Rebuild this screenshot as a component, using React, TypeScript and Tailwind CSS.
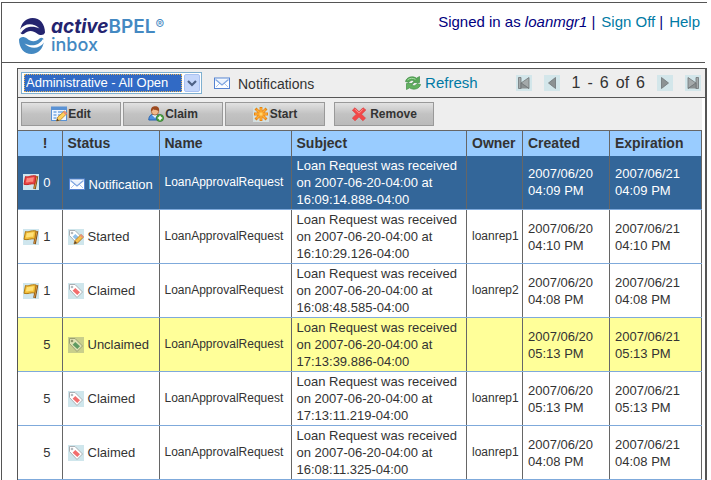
import React from "react";

function Mail() {
  return (
    <svg className="block h-4 w-4 shrink-0" viewBox="0 0 16 16" aria-hidden="true">
      <rect x="0.5" y="3" width="15" height="10.5" fill="#fdfeff" stroke="#5583d2" />
      <path d="M2 12l4-4M14 12l-4-4" stroke="#a9c4ec" fill="none" />
      <path d="M1.500 4.500L8 10l6.500-5.500" stroke="#7fa5e0" strokeWidth="1.300" fill="#eaf2fd" />
    </svg>
  );
}

function Flag({ red }: { red?: boolean }) {
  const light = red ? "#ff8a80" : "#ffe27a";
  const fill = red ? "#e84545" : "#f2bf3a";
  const line = red ? "#c62828" : "#b07a14";
  return (
    <svg className="block h-4 w-4 shrink-0" viewBox="0 0 16 16" aria-hidden="true">
      <rect width="16" height="16" fill="#cfe6ee" />
      <path d="M14 2l-2.500 13" stroke="#7d4a12" strokeWidth="2.600" />
      <path d="M14 2l-2.500 12.500" stroke="#e0a14a" strokeWidth="1" />
      <path d="M2.500 2.500c3 1.200 5-1.500 10.500-.5l-1.200 8c-4-1-6.500 1.500-10.800.3z" fill={fill} stroke={line} />
      <path d="M3.900 4c2.500.6 4-.8 7-.7l-.8 4.500C7 7.500 5.500 8.700 2.900 8.300z" fill={light} />
    </svg>
  );
}

function Tag({ kind }: { kind: string }) {
  const open = kind === "Unclaimed";
  const started = kind === "Started";
  return (
    <svg className="block h-4 w-4 shrink-0" viewBox="0 0 16 16" aria-hidden="true">
      <rect width="16" height="16" fill={open ? "#c9cf8b" : "#cfe6ec"} />
      <path d="M1.500 1.500l5.500 0 7.500 7.500-5.500 5.500-7.500-8z" fill={open ? "#dfe3b4" : "#fff"} stroke={open ? "#9ba072" : "#aab0b5"} />
      <circle cx="4" cy="4" r="1.300" fill={open ? "#8d936a" : "#b4b9bd"} />
      <path d="M7.300 5l4.700 4.300-2.700 2.700-4.700-4.300z" fill={open ? "#5f9a62" : started ? "#8fc0ea" : "#f26d6d"} />
      {started && (
        <g>
          <path d="M6 15l1-3.500 6-6 2.500 2.500-6 6z" fill="#f7c14c" stroke="#b5771c" strokeWidth=".8" />
          <path d="M6 15l1-3 2 2z" fill="#584433" />
          <path d="M12 6.500l1.200-1.200 2.400 2.400L14.400 9z" fill="#e88f84" />
        </g>
      )}
    </svg>
  );
}

function EditIcon() {
  return (
    <svg className="block h-4 w-4" viewBox="0 0 16 16" aria-hidden="true">
      <rect x="0.500" y="1" width="15" height="13.500" fill="#eef6ff" stroke="#5a92d4" />
      <path d="M1 2.500h14" stroke="#5a92d4" strokeWidth="3" />
      <path d="M2.500 6h3M2.500 9h3M2.500 12h3M7 6h6M7 9h3" stroke="#77a9e2" strokeWidth="1.500" />
      <path d="M5.500 15l1.300-4 6.700-6L16 7.500 9.300 14z" fill="#ffd25d" stroke="#b97e1b" strokeWidth=".8" />
      <path d="M12 6.300L13.500 5 16 7.500l-1.500 1.400z" fill="#ee8c78" />
      <path d="M5.500 15l.7-2.200L8 14.400z" fill="#40342c" />
    </svg>
  );
}

function ClaimIcon() {
  return (
    <svg className="block h-4 w-4" viewBox="0 0 16 16" aria-hidden="true">
      <path d="M.8 14c0-4 2-6 6-6s6 2 6 6z" fill="#4d90df" stroke="#2563b0" />
      <path d="M4 9l3 3 3-3" fill="#e9f3ff" />
      <circle cx="7" cy="5.500" r="3.600" fill="#f2b98b" stroke="#9c5627" strokeWidth=".7" />
      <path d="M3 5.500C2.500 1.500 5 .3 7.200.3 10 .3 11.700 2 11 5.500 10 3.500 6 4.500 5 3.300 4.500 5 3.800 4.800 3 5.500z" fill="#9c4a20" />
      <circle cx="12" cy="12" r="3.600" fill="#4da343" stroke="#2e752a" strokeWidth=".7" />
      <path d="M12 9.800v4.400M9.800 12h4.400" stroke="#fff" strokeWidth="1.500" />
    </svg>
  );
}

function StartIcon() {
  return (
    <svg className="block h-4 w-4" viewBox="0 0 16 16" aria-hidden="true">
      <rect width="16" height="16" fill="#d3dfe0" />
      <path d="M8 1v14M1 8h14M2.500 2.500l11 11M13.500 2.500l-11 11" stroke="#e88413" strokeWidth="2.800" />
      <path d="M8 2v12M2 8h12M3.500 3.500l9 9M12.500 3.500l-9 9" stroke="#ffae35" strokeWidth="1.500" />
      <circle cx="8" cy="8" r="1.500" fill="#ffd36b" />
    </svg>
  );
}

function RemoveIcon() {
  return (
    <svg className="block h-4 w-4" viewBox="0 0 16 16" aria-hidden="true">
      <path d="M4 1.800l4 4 4-4L14.800 4 10.500 8.200l4 4-2.700 2.500L8 10.800l-4 4L1.400 12l4-3.800-4-4z" fill="#f34848" stroke="#dd4446" strokeWidth=".8" />
      <path d="M4 3.200l4 4 4-4" stroke="#ff9a94" fill="none" />
    </svg>
  );
}

function RefreshIcon() {
  const arrow = "M.5 6.500C1.500 2 7.500.5 11.500 3.200L14.500 1.500v6H7.500L9.500 5.800C7.500 4.800 5 5 4 7.500z";
  return (
    <svg className="block h-4 w-4" viewBox="0 0 16 16" aria-hidden="true">
      <path d={arrow} fill="#58a858" stroke="#3f8c45" strokeWidth=".7" />
      <path d={arrow} transform="rotate(180 8 8)" fill="#62b160" stroke="#3f8c45" strokeWidth=".7" />
      <path d="M2.500 5C4.500 3 8 2.800 10.500 4.300" stroke="#a9dda4" fill="none" />
    </svg>
  );
}

function PageIcon({ back, end }: { back?: boolean; end?: boolean }) {
  return (
    <svg className="block h-4 w-4" viewBox="0 0 16 16" aria-hidden="true">
      <rect width="16" height="16" fill="#d3e6ea" />
      <g transform={back ? "matrix(-1 0 0 1 16 0)" : undefined}>
        {end ? (
          <g stroke="#707577" strokeWidth=".8">
            <path d="M3 2.500v11L11 8z" fill="#a4a9aa" />
            <path d="M11 2.500h2.500v11H11z" fill="#a4a9aa" />
            <path d="M3 13.500L11 8v5.500" fill="#8b9091" />
          </g>
        ) : (
          <path d="M4.500 2.500v11L11.500 8z" fill="#8c9293" stroke="#6f7577" strokeWidth=".8" />
        )}
      </g>
    </svg>
  );
}

function LogoHalf({ color }: { color: string }) {
  return (
    <g>
      <path d="M1 13C2 5 7 0 13.500 0 21 0 26 6 26 14.500 25 17.500 21 17.800 18 15.500 14 12 9 12 5.500 15.500 3.500 17 1 16 1 13z" fill={color} />
      <path d="M1 11.500C5 5.500 14 4 20.500 10.500 14.500 7.500 6 8 2.500 14.500L0 15z" fill="#fff" />
    </g>
  );
}

function Logo() {
  return (
    <div className="flex items-start gap-[6px]">
      <svg className="mt-[1px] h-[36px] w-[26px]" viewBox="0 0 26 36" aria-hidden="true">
        <LogoHalf color="#24246f" />
        <g transform="rotate(180 13 18)">
          <LogoHalf color="#4489c2" />
        </g>
      </svg>
      <div className="font-['Inter','Liberation_Sans',sans-serif] text-[#4489c2]">
        <div className="flex text-[19px] leading-5">
          <span className="font-bold text-[#24246f] italic">active</span>
          <span className="font-semibold">BPEL</span>
          <span className="text-[13px] leading-[14px]">®</span>
        </div>
        <div className="text-[18px] leading-[15px] font-medium">inbox</div>
      </div>
    </div>
  );
}

const actions = [
  { label: "Edit", icon: <EditIcon /> },
  { label: "Claim", icon: <ClaimIcon /> },
  { label: "Start", icon: <StartIcon /> },
  { label: "Remove", icon: <RemoveIcon /> },
];

type Task = {
  priority: number;
  status: string;
  stamp: string;
  owner: string;
  time: string;
};

const tasks: Task[] = [
  { priority: 0, status: "Notification", stamp: "16:09:14.888-04:00", owner: "", time: "04:09 PM" },
  { priority: 1, status: "Started", stamp: "16:10:29.126-04:00", owner: "loanrep1", time: "04:10 PM" },
  { priority: 1, status: "Claimed", stamp: "16:08:48.585-04:00", owner: "loanrep2", time: "04:08 PM" },
  { priority: 5, status: "Unclaimed", stamp: "17:13:39.886-04:00", owner: "", time: "05:13 PM" },
  { priority: 5, status: "Claimed", stamp: "17:13:11.219-04:00", owner: "loanrep1", time: "05:13 PM" },
  { priority: 5, status: "Claimed", stamp: "16:08:11.325-04:00", owner: "loanrep1", time: "04:08 PM" },
];

function rowColor(status: string) {
  if (status === "Notification") return "bg-[#336699] text-white";
  if (status === "Unclaimed") return "bg-[#ffff99]";
  return "bg-white";
}

const cell = "border-r border-b border-r-[#666] border-b-[#7faadb] pl-[5px] ";

function TaskTable() {
  return (
    <table className="w-full table-fixed border-collapse text-left text-[13px] leading-[17px]">
      <colgroup>
        <col className="w-[44px]" />
        <col className="w-[97px]" />
        <col className="w-[132px]" />
        <col />
        <col className="w-[56px]" />
        <col className="w-[87px]" />
        <col className="w-[92px]" />
      </colgroup>
      <thead>
        <tr className="h-[25px] bg-[#99ccff] text-[14px]">
          {["!", "Status", "Name", "Subject", "Owner", "Created", "Expiration"].map((name) => (
            <th
              key={name}
              scope="col"
              className="border-x border-t border-[#666] px-[5px] font-bold first:border-l-0 first:pr-[14px] first:text-right"
            >
              {name}
            </th>
          ))}
        </tr>
      </thead>
      <tbody>
        {tasks.map((t) => (
          <tr key={t.stamp} className={"h-[54px] " + rowColor(t.status)}>
            <td className={cell + "pr-[11px]"}>
              <div className="flex items-center justify-end gap-1">
                {t.priority < 5 && <Flag red={t.priority === 0} />}
                {t.priority}
              </div>
            </td>
            <td className={cell}>
              <div className={"flex items-center gap-1 " + (t.status === "Notification" ? "pt-1 pl-px" : "")}>
                {t.status === "Notification" ? <Mail /> : <Tag kind={t.status} />}
                {t.status}
              </div>
            </td>
            <td className={cell + "text-[12px]"}>LoanApprovalRequest</td>
            <td className={cell}>
              Loan Request was received
              <br />
              on 2007-06-20-04:00 at
              <br />
              {t.stamp}
            </td>
            <td className={cell + "text-[12px]"}>{t.owner}</td>
            <td className={cell}>
              2007/06/20
              <br />
              {t.time}
            </td>
            <td className={cell}>
              2007/06/21
              <br />
              {t.time}
            </td>
          </tr>
        ))}
      </tbody>
    </table>
  );
}

export default function App() {
  return (
    <div className="bg-white pt-[2px] pr-1 pl-px font-['Liberation_Sans',Arial,sans-serif] text-[#333]">
      <div className="border-t border-l border-[#555]">
        <header className="mr-[2px] flex h-[60px] items-start justify-between border-b border-[#555] pt-[14px] pr-[5px] pl-[17px]">
          <Logo />
          <div className="-mt-1 flex text-[15px] leading-[18px] text-[#000080]">
            <span className="mr-1">
              Signed in as <em>loanmgr1</em>
            </span>
            |
            <a href="#sign-off" className="mr-1 ml-[6px] text-[#007aa5]">Sign Off</a>
            |
            <a href="#help" className="ml-[6px] text-[#007aa5]">Help</a>
          </div>
        </header>
        <main className="mt-[5px] ml-[15px] border border-r-2 border-b-0 border-[#555]">
          <div className="flex h-[29px] items-center border-b border-[#555] bg-[#eee] pr-1 pl-[3px]">
            <div className="flex h-[22px] w-[181px] items-center justify-between border border-[#7fb0d0] bg-white pr-px pl-[2px]">
              <div className="relative flex w-full items-center">
                <select
                  aria-label="Task filter"
                  className="h-[18px] w-full appearance-none rounded-none border-r-[18px] border-white bg-[#316ac5] pl-[2px] text-[13px] leading-[16px] text-white outline-1 outline-offset-[-1px] outline-transparent"
                >
                  <option>Administrative - All Open</option>
                </select>
                <span className="pointer-events-none absolute top-0 right-[18px] bottom-0 left-0 border border-dotted border-[#e3b45b]" />
                <svg className="pointer-events-none absolute right-0 h-[18px] w-4" viewBox="0 0 16 18" aria-hidden="true">
                  <rect x=".5" y=".5" width="15" height="17" rx="1.500" fill="#c5d7fb" stroke="#a9c1f1" />
                  <path d="M4 7l4 4 4-4" fill="none" stroke="#4d6185" strokeWidth="2.200" />
                </svg>
              </div>
            </div>
            <button type="button" className="ml-3 flex items-center gap-2 text-[14px]">
              <Mail />
              <span className="pt-[3px]">Notifications</span>
            </button>
            <a href="#refresh" className="ml-auto flex items-center gap-1 text-[15px] text-[#007aa5]">
              <RefreshIcon />
              Refresh
            </a>
            <nav aria-label="Pages" className="ml-[38px] flex items-center gap-3 text-[16px]">
              <button type="button" aria-label="First page"><PageIcon back end /></button>
              <button type="button" aria-label="Previous page"><PageIcon back /></button>
              <span className="flex gap-[7px]">
                <span>1</span>
                <span>-</span>
                <span>6</span>
                <span>of</span>
                <span>6</span>
              </span>
              <button type="button" aria-label="Next page"><PageIcon /></button>
              <button type="button" aria-label="Last page"><PageIcon end /></button>
            </nav>
          </div>
          <div className="mr-[3px]">
            <div className="flex h-8 items-center gap-[2px] bg-[#eee] pl-[3px]">
              {actions.map((a) => (
                <button
                  key={a.label}
                  type="button"
                  className="flex h-6 w-[100px] items-center justify-center gap-px border border-[#999] bg-linear-to-b from-[#e2e2e2] via-[#c2c2c2] to-[#bababa] pb-px text-[12px] font-bold last:ml-[7px] last:gap-[3px]"
                >
                  {a.icon}
                  {a.label}
                </button>
              ))}
            </div>
            <TaskTable />
          </div>
        </main>
      </div>
    </div>
  );
}
